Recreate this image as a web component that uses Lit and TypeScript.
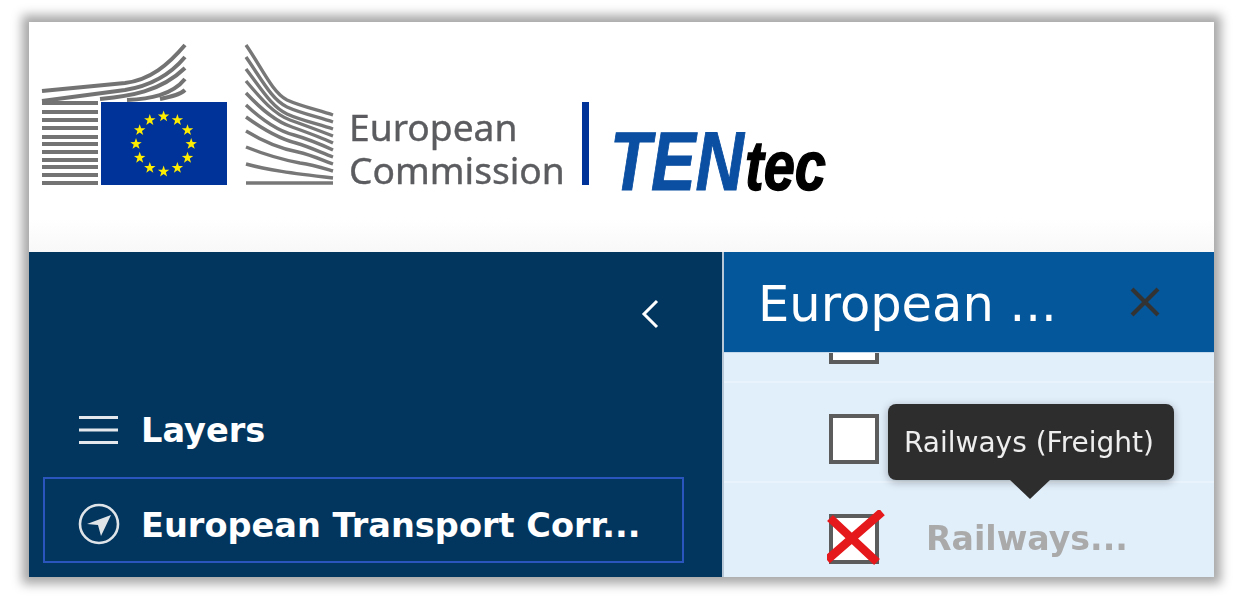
import { LitElement, html, css, svg } from "lit";
import { customElement } from "lit/decorators.js";

function starPath(cx: number, cy: number, r: number): string {
  const pts: string[] = [];
  for (let i = 0; i < 10; i++) {
    const a = -Math.PI / 2 + (i * Math.PI) / 5;
    const rr = i % 2 === 0 ? r : r * 0.4;
    pts.push(`${(cx + rr * Math.cos(a)).toFixed(2)},${(cy + rr * Math.sin(a)).toFixed(2)}`);
  }
  return pts.join(" ");
}

const stars = Array.from({ length: 12 }, (_, i) => {
  const a = (i * Math.PI) / 6;
  return starPath(163.6 + 27.6 * Math.sin(a), 144 - 27.6 * Math.cos(a), 6);
});

const leftStripes = [103, 112, 120, 128, 137, 144, 152, 160, 167, 175, 183];
const leftCurves = [
  "M42 91 L125 83 C150 80 168 65 185 45",
  "M42 101 L125 90 C150 86 170 75 185 57",
  "M100 99 C130 96 160 92 185 68",
  "M127 100 C150 99 172 95 185 79",
  "M160 99 C170 97 180 95 185 90",
];
const rightCurves = [
  "M246 45 C262 68 272 92 287 100 C300 106 318 110 333 115",
  "M246 57 C262 80 272 100 287 107 C300 113 318 117 333 122",
  "M246 69 C262 90 272 107 287 114 C300 120 318 124 333 129",
  "M246 81 C262 100 274 114 290 120 C304 125 320 131 333 136",
  "M246 93 C262 110 276 122 292 127 C306 132 320 137 333 143",
  "M246 105 C262 120 278 131 294 135 C308 139 320 144 333 150",
  "M246 117 C264 130 280 139 296 143 C310 147 322 153 333 157",
  "M246 131 C264 142 282 149 298 152 C312 155 324 161 333 164",
  "M246 147 C266 155 284 160 300 163 C314 165 326 169 333 171",
  "M246 164 C268 170 290 173 333 178",
  "M246 183 L333 183",
];

@customElement("app-root")
export class AppRoot extends LitElement {
  static styles = css`
    :host {
      display: block;
      padding: 22px 29px;
      height: 600px;
      box-sizing: border-box;
      background: #fff;
      overflow: hidden;
    }
    .card {
      height: 555px;
      display: flex;
      flex-direction: column;
      box-shadow: 0 0 10px 7px #a8a8a8;
      background: #fff;
      font-family: "DejaVu Sans", Verdana, sans-serif;
      filter: blur(0.45px);
    }
    .header {
      height: 230px;
      flex: none;
      position: relative;
      background: linear-gradient(#fff 0, #fff 198px, #f8f8f8 230px);
    }
    .logo {
      position: absolute;
      left: -29px;
      top: -22px;
      width: 900px;
      height: 252px;
      display: block;
    }
    .ec-text {
      font-family: "Noto Sans", "Open Sans", sans-serif;
      font-size: 37.2px;
      fill: #5b5c5f;
      stroke: #5b5c5f;
      stroke-width: 0.4px;
    }
    .ten {
      font-family: "Liberation Sans", Arial, sans-serif;
      font-style: italic;
      font-weight: 700;
      font-size: 84px;
      fill: #0b4fa2;
      stroke: #0b4fa2;
      stroke-width: 1px;
    }
    .tec {
      font-family: "Liberation Sans", Arial, sans-serif;
      font-style: italic;
      font-weight: 700;
      font-size: 70px;
      fill: #000;
      stroke: #000;
      stroke-width: 1.4px;
    }
    .main {
      flex: 1;
      display: flex;
      min-height: 0;
    }
    .sidebar {
      width: 693px;
      flex: none;
      background: #03365f;
      color: #fff;
      box-sizing: border-box;
      padding: 47px 14px 0 14px;
      display: flex;
      flex-direction: column;
    }
    .collapse {
      display: flex;
      justify-content: flex-end;
      height: 44px;
    }
    .collapse svg {
      display: block;
      margin-right: 47px;
    }
    .nav-row {
      display: flex;
      align-items: center;
      font-weight: 700;
      font-size: 33.6px;
      color: #fff;
      white-space: nowrap;
    }
    .layers {
      margin-top: 64px;
      padding-left: 36px;
      height: 46px;
      gap: 22px;
    }
    .active {
      margin-top: 24px;
      height: 86px;
      box-sizing: border-box;
      width: 641px;
      border: 2px solid #2a55bd;
      padding: 8px 0 0 33px;
      gap: 21px;
    }
    .active span {
      padding-top: 2px;
    }
    .divider {
      width: 2px;
      flex: none;
      background: #b9c8d6;
    }
    .panel {
      flex: 1;
      min-width: 0;
      display: flex;
      flex-direction: column;
      background: #e1effb;
      position: relative;
      overflow: hidden;
    }
    .panel-head {
      height: 100px;
      flex: none;
      background: #05579c;
      color: #fff;
      display: flex;
      align-items: center;
      justify-content: space-between;
      padding: 0 54px 0 34px;
      font-size: 49.5px;
      position: relative;
      z-index: 1;
      white-space: nowrap;
      box-shadow: 0 1px 0 #c4d9ec;
    }
    .panel-head span {
      padding-top: 3px;
    }
    .list {
      margin-top: -69px;
    }
    .row {
      height: 100px;
      box-sizing: border-box;
      padding: 31px 0 0 105px;
      display: flex;
      gap: 47px;
      border-bottom: 2px solid #e9f3fc;
    }
    .check {
      width: 50px;
      height: 50px;
      box-sizing: border-box;
      border: 4.5px solid #5c5c5c;
      background: #fff;
      flex: none;
      position: relative;
    }
    .cross {
      position: absolute;
      left: -6.5px;
      top: -8.5px;
      display: block;
    }
    .label {
      font-weight: 700;
      font-size: 33.2px;
      color: #aaa;
      line-height: 50px;
      white-space: nowrap;
    }
    .tooltip {
      position: absolute;
      left: 164px;
      top: 152px;
      width: 286px;
      height: 76px;
      box-sizing: border-box;
      border-radius: 8px;
      background: #2d2d2d;
      color: #eee;
      font-size: 28px;
      padding-left: 16px;
      display: flex;
      align-items: center;
      white-space: nowrap;
      box-shadow: 0 2px 8px rgba(0, 0, 0, 0.3);
      z-index: 2;
    }
    .tooltip::after {
      content: "";
      position: absolute;
      left: 122px;
      top: 76px;
      border-style: solid;
      border-width: 19px 20px 0 20px;
      border-color: #2d2d2d transparent transparent transparent;
    }
  `;

  private logo() {
    return html`<svg class="logo" viewBox="0 0 900 252" aria-label="European Commission TENtec">
      <g fill="none" stroke="#737373" stroke-width="4">
        ${leftStripes.map((y) => svg`<line x1="42" x2="98" y1=${y} y2=${y}></line>`)}
        ${leftCurves.map((d) => svg`<path d=${d}></path>`)}
      </g>
      <g fill="none" stroke="#777" stroke-width="3.4">
        ${rightCurves.map((d) => svg`<path d=${d}></path>`)}
      </g>
      <rect x="101" y="102" width="126" height="83" fill="#003399"></rect>
      ${stars.map((p) => svg`<polygon points=${p} fill="#ffed00"></polygon>`)}
      <text class="ec-text" x="349" y="141">European</text>
      <text class="ec-text" x="349" y="184">Commission</text>
      <rect x="582" y="102" width="7" height="83" fill="#003399"></rect>
      <text class="ten" x="610" y="190" textLength="134" lengthAdjust="spacingAndGlyphs">TEN</text>
      <text class="tec" x="745" y="190" textLength="81" lengthAdjust="spacingAndGlyphs">tec</text>
    </svg>`;
  }

  render() {
    return html`
      <div class="card">
        <div class="header">${this.logo()}</div>
        <div class="main">
          <nav class="sidebar">
            <div class="collapse">
              <svg width="20" height="30" viewBox="0 0 20 30" fill="none" stroke="#fff" stroke-width="3">
                <path d="M16 2 L3 15 L16 28"></path>
              </svg>
            </div>
            <div class="nav-row layers">
              <svg width="40" height="30" viewBox="0 0 40 30" stroke="#e4e8ec" stroke-width="3">
                <path d="M0 2.5H39M0 15H39M0 27.5H39"></path>
              </svg>
              <span>Layers</span>
            </div>
            <div class="nav-row active">
              <svg width="42" height="42" viewBox="0 0 42 42">
                <circle cx="21" cy="21" r="19" fill="none" stroke="#dfe4e8" stroke-width="2.6"></circle>
                <path d="M9 21 L33 12 L23 33 L20 22 Z" fill="#dfe4e8"></path>
              </svg>
              <span>European Transport Corr...</span>
            </div>
          </nav>
          <div class="divider"></div>
          <section class="panel">
            <div class="panel-head">
              <span>European ...</span>
              <svg width="30" height="30" viewBox="0 0 30 30" stroke="#333" stroke-width="4.2">
                <path d="M2 2 L28 28 M28 2 L2 28"></path>
              </svg>
            </div>
            <div class="list">
              <div class="row"><div class="check"></div></div>
              <div class="row"><div class="check"></div></div>
              <div class="row">
                <div class="check">
                  <svg class="cross" width="60" height="60" viewBox="0 0 60 60" stroke="#e5181b" stroke-width="8.5">
                    <path d="M0 50 L55 2 M3 8 L50 52"></path>
                  </svg>
                </div>
                <span class="label">Railways...</span>
              </div>
            </div>
            <div class="tooltip">Railways (Freight)</div>
          </section>
        </div>
      </div>
    `;
  }
}
